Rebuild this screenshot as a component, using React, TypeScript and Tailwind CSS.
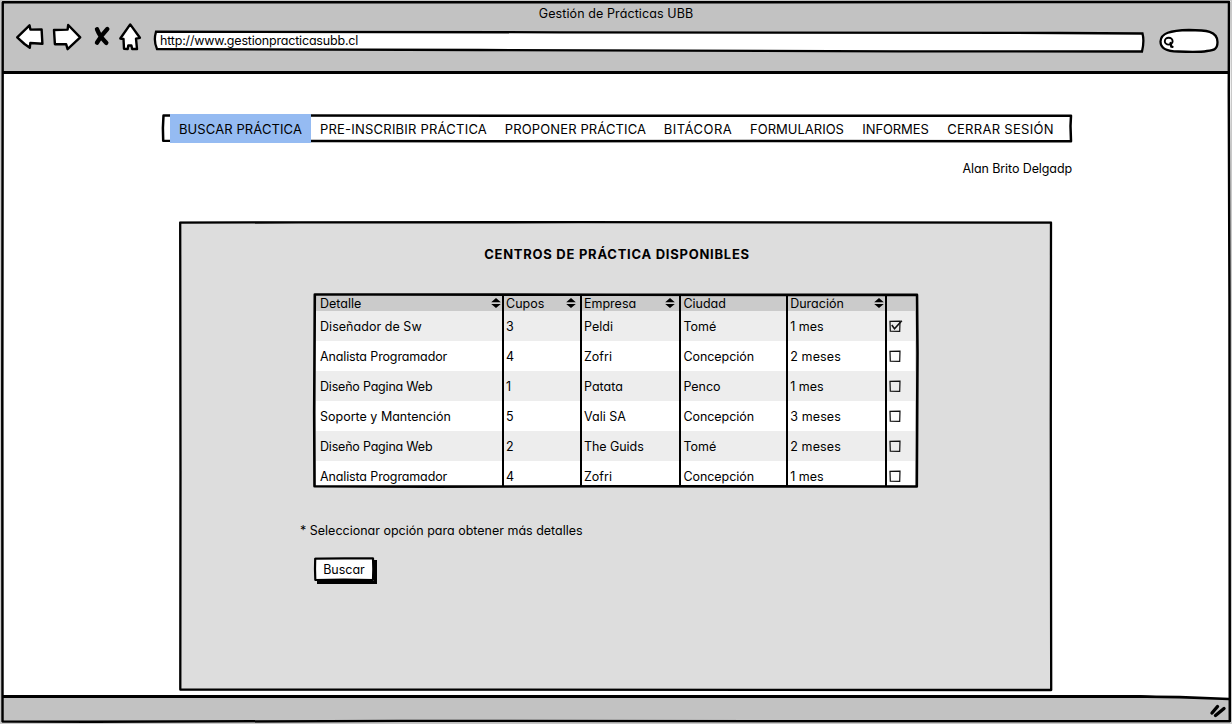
const navItems = [
  { label: "BUSCAR PRÁCTICA", width: "w-[141px]", tracking: "tracking-[0.1px]", active: true },
  { label: "PRE-INSCRIBIR PRÁCTICA", width: "w-[185px]", tracking: "tracking-[0.22px]" },
  { label: "PROPONER PRÁCTICA", width: "w-[159px]", tracking: "tracking-[0.12px]" },
  { label: "BITÁCORA", width: "w-[86px]", tracking: "tracking-[0.5px]" },
  { label: "FORMULARIOS", width: "w-[112px]", tracking: "tracking-[0]" },
  { label: "INFORMES", width: "w-[85px]", tracking: "tracking-[-0.1px]" },
  { label: "CERRAR SESIÓN", width: "w-[125px]", tracking: "tracking-[0.3px]" },
];

const columns = [
  { label: "Detalle", sortable: true, gap: "pr-[1px]" },
  { label: "Cupos", sortable: true, gap: "pr-[4px]" },
  { label: "Empresa", sortable: true, gap: "pr-[4px]" },
  { label: "Ciudad", sortable: false, gap: "" },
  { label: "Duración", sortable: true, gap: "pr-[1px]" },
  { label: "", sortable: false, gap: "" },
];

const rows = [
  ["Diseñador de Sw", "3", "Peldi", "Tomé", "1 mes"],
  ["Analista Programador", "4", "Zofri", "Concepción", "2 meses"],
  ["Diseño Pagina Web", "1", "Patata", "Penco", "1 mes"],
  ["Soporte y Mantención", "5", "Vali SA", "Concepción", "3 meses"],
  ["Diseño Pagina Web", "2", "The Guids", "Tomé", "2 meses"],
  ["Analista Programador", "4", "Zofri", "Concepción", "1 mes"],
];

const cellTracking: Record<string, string> = {
  "Diseñador de Sw": "tracking-[0.04px]",
  "Analista Programador": "tracking-[-0.13px]",
  "Diseño Pagina Web": "tracking-[-0.2px]",
  "2 meses": "tracking-[0.12px]",
  "3 meses": "tracking-[0.12px]",
  "The Guids": "tracking-[-0.06px]",
  Concepción: "tracking-[-0.05px]",
};

const cellPadding = ["pl-1", "pl-0.5", "pl-0.5", "pl-[2.4px]", "pl-[2.2px]", "pl-0.5"];
const gridColumns = "grid grid-cols-[188px_78px_99px_107px_99px_28px]";

/* Slightly uneven hand-drawn outline laid over a box of the given size. */
function SketchFrame({ width, height, path, stroke }: { width: number; height: number; path: string; stroke: number }) {
  return (
    <svg
      className="pointer-events-none absolute inset-0 size-full overflow-visible"
      viewBox={`0 0 ${width} ${height}`}
      fill="none"
      stroke="#000"
      strokeWidth={stroke}
      strokeLinejoin="round"
    >
      <path d={path} />
    </svg>
  );
}

function NavIcons() {
  return (
    <svg
      className="h-[32px] w-[130px] shrink-0"
      viewBox="14 20 130 32"
      fill="#fff"
      stroke="#000"
      strokeWidth="2.4"
      strokeLinejoin="round"
      strokeLinecap="round"
    >
      <path d="M17.2 37.300 29.500 25.300 30.400 29.600 41.600 29.400 42.400 43.800 30.300 43 29.800 47.800 24.500 44Z" />
      <path d="M54 30 67.600 29.600 68.200 25 80.200 37.400 67.600 49.200 66.200 44.300 54.900 44.200Z" />
      <path d="M97 29.300Q100 37 106.300 42.800M107.300 29Q101.500 35 97 42.600" fill="none" strokeWidth="4.4" />
      <path d="M130.200 24.400 139.900 37.800 136 38.700 137 49 132.200 49 131.400 45.500 128.300 45.500 127.700 49 124 48.800 123.500 39 120.300 38.500Z" />
    </svg>
  );
}

function SearchPill() {
  return (
    <svg className="h-[28px] w-[62px] shrink-0" viewBox="1158 27 62 28" stroke="#000" fill="none">
      <path
        d="M1160.500 41.500C1161 33 1170 30.500 1189 30C1206 30 1217.500 31 1217.500 42C1217.500 49.500 1214 50 1207 51C1199 52.500 1188 52 1178 51.500C1167 51.500 1160.500 49 1160.500 41.500Z"
        fill="#fff"
        strokeWidth="2.300"
      />
      <ellipse cx="1168.700" cy="41.200" rx="3.900" ry="3.400" strokeWidth="1.900" />
      <path d="M1170.500 43 1171.300 46.500 1172.500 46.800" strokeWidth="2.300" strokeLinecap="round" />
    </svg>
  );
}

function AddressFrame() {
  return (
    <svg className="absolute inset-0 size-full" viewBox="153 29 993 25" fill="#fff" stroke="#000" strokeWidth="2.300">
      <path d="M156 31.700Q300 31.800 560 32.300T1060 33L1142.500 33.500Q1144.500 41 1142 51.500L900 51.300 480 50 157 49Q153.300 41 156 31.700Z" />
    </svg>
  );
}

function SortIcon() {
  return (
    <svg className="mb-[4px] h-[10px] w-[10px]" viewBox="0 0 10 10">
      <path d="M5 0 9.800 4.200H.2ZM.2 6H9.800L5 10Z" fill="#000" />
    </svg>
  );
}

function Checkbox({ checked }: { checked: boolean }) {
  return (
    <svg className="h-[14px] w-[14px]" viewBox="0 0 14 14" fill="none" stroke="#111" strokeWidth="1.200">
      <path d="M1 2.300 11 2.100 10.700 12.400 1.300 12.100Z" />
      {checked && <path d="M2.800 6 5.500 9.800 12.800 1.700" strokeWidth="1.600" />}
    </svg>
  );
}

function CentersTable() {
  return (
    <div className="relative h-[195px] w-[605px] p-[3px]">
      <div className="h-[190px] overflow-hidden bg-white">
        <div className={`${gridColumns} h-[15px] bg-[#cbcbcb]`}>
          {columns.map((column, i) => (
            <div
              key={i}
              className={`flex items-center justify-between ${cellPadding[i]} ${column.gap} ${i < 5 ? "border-r-2 border-black" : ""}`}
            >
              <span className="mb-[2px]">{column.label}</span>
              {column.sortable && <SortIcon />}
            </div>
          ))}
        </div>
        {rows.map((row, r) => (
          <div key={r} className={`${gridColumns} h-[30px] ${r % 2 === 0 ? "bg-[#ededed]" : "bg-white"}`}>
            {row.map((cell, i) => (
              <div
                key={i}
                className={`flex items-center border-r-2 border-black pt-[2px] ${cellPadding[i]} ${cellTracking[cell] ?? ""}`}
              >
                {cell}
              </div>
            ))}
            <div className="flex items-center pl-0.5">
              <Checkbox checked={r === 0} />
            </div>
          </div>
        ))}
      </div>
      <SketchFrame
        width={605}
        height={195}
        stroke={2.6}
        path="M1.800 1.500 60 1.500 300 1.800 604 1.900 604.500 60 603.800 193.500 300 193.200 120 193.600 1.500 193.300 1.200 120Z"
      />
    </div>
  );
}

export default function App() {
  return (
    <div className="h-[724px] w-[1232px] overflow-hidden bg-[#c8c8c8] p-px font-[Inter,sans-serif] text-[12.5px] leading-[16px] whitespace-nowrap text-black [font-feature-settings:'cv11']">
      <div className="relative flex h-[722px] w-[1230px] flex-col bg-white p-[2px]">
        <header className="h-[71px] shrink-0 border-b-[3px] border-black bg-[#c2c2c2]">
          <div className="flex h-[19px] items-end justify-center">
            <span className="tracking-[0.1px]">Gestión de Prácticas UBB</span>
          </div>
          <div className="-mt-[2px] flex pl-[11px]">
            <NavIcons />
            <div className="relative mt-[9px] ml-[9px] flex h-[25px] w-[993px] items-center pl-[7px]">
              <AddressFrame />
              <span className="relative mb-px tracking-[-0.19px]">http://www.gestionpracticasubb.cl</span>
            </div>
            <div className="mt-[7px] ml-[12px]">
              <SearchPill />
            </div>
          </div>
        </header>

        <main className="flex min-h-0 flex-1 flex-col">
          <nav className="relative mt-[40px] ml-[159px] flex h-[29px] w-[910px] items-center pl-[8px] text-[13px]">
            <SketchFrame
              width={910}
              height={29}
              stroke={2.5}
              path="M1.500 1.500 130 1.400 400 1.800 909 1.800 908.500 12 909 27.200 600 26.900 320 27.300 150 27 1.200 26.800 .9 14Z"
            />
            {navItems.map((item) => (
              <a
                key={item.label}
                className={`relative flex h-[29px] shrink-0 items-center justify-center ${item.width} ${item.tracking} ${item.active ? "bg-[#95bbf2]" : ""}`}
              >
                {item.label}
              </a>
            ))}
          </nav>
          <div className="mt-[18px] flex w-[1069px] justify-end">
            <span className="tracking-[-0.1px]">Alan Brito Delgadp</span>
          </div>

          <section className="relative mt-[44px] ml-[176px] h-[470px] w-[873px] shrink-0 bg-[#ddd] p-[2px]">
            <h1 className="mt-[23px] pl-[3px] text-center text-[13px] font-bold tracking-[0.74px]">
              CENTROS DE PRÁCTICA DISPONIBLES
            </h1>
            <div className="mt-[31px] ml-[132px]">
              <CentersTable />
            </div>
            <p className="mt-[35px] ml-[119px]">* Seleccionar opción para obtener más detalles</p>
            <button className="relative mt-[18px] ml-[133px] flex h-[24px] w-[60px] items-center justify-center bg-white pt-[2px] shadow-[3px_3px_0_#000]">
              Buscar
              <SketchFrame
                width={60}
                height={24}
                stroke={2.2}
                path="M1.200 1.600 30 1.400 59 1.300 59.300 12 59 23 30 22.600 1.300 23 1 12Z"
              />
            </button>
            <SketchFrame
              width={873}
              height={470}
              stroke={2.3}
              path="M1.200 1.600 120 1.400 400 1.200 872 1.600 871.800 200 872.200 469 300 468.600 1.300 468.600 1.500 250Z"
            />
          </section>
        </main>

        <footer className="flex h-[26px] shrink-0 justify-end border-t-[3px] border-black bg-[#c2c2c2]">
          <svg className="-mt-[3px] h-[26px] w-[100px]" viewBox="1129 695 100 26" stroke="#000" strokeLinecap="round">
            <path d="M1129 694H1229V699L1180 697.500 1140 695Z" fill="#fff" stroke="none" />
            <path d="M1130 696.500Q1180 696.500 1229 699" fill="none" strokeWidth="2.600" />
            <path d="M1212 713 1217.500 706.500M1215.500 715.500 1224 708.500" strokeWidth="3.400" />
          </svg>
        </footer>
        <SketchFrame
          width={1230}
          height={722}
          stroke={2.5}
          path="M1.700 1.200 300 1.300 1228 1 1227.800 90 1228.500 300 1228.800 720.300 800 720.200 400 720 90 720.800 1.500 720.500 1.300 400Z"
        />
      </div>
    </div>
  );
}
